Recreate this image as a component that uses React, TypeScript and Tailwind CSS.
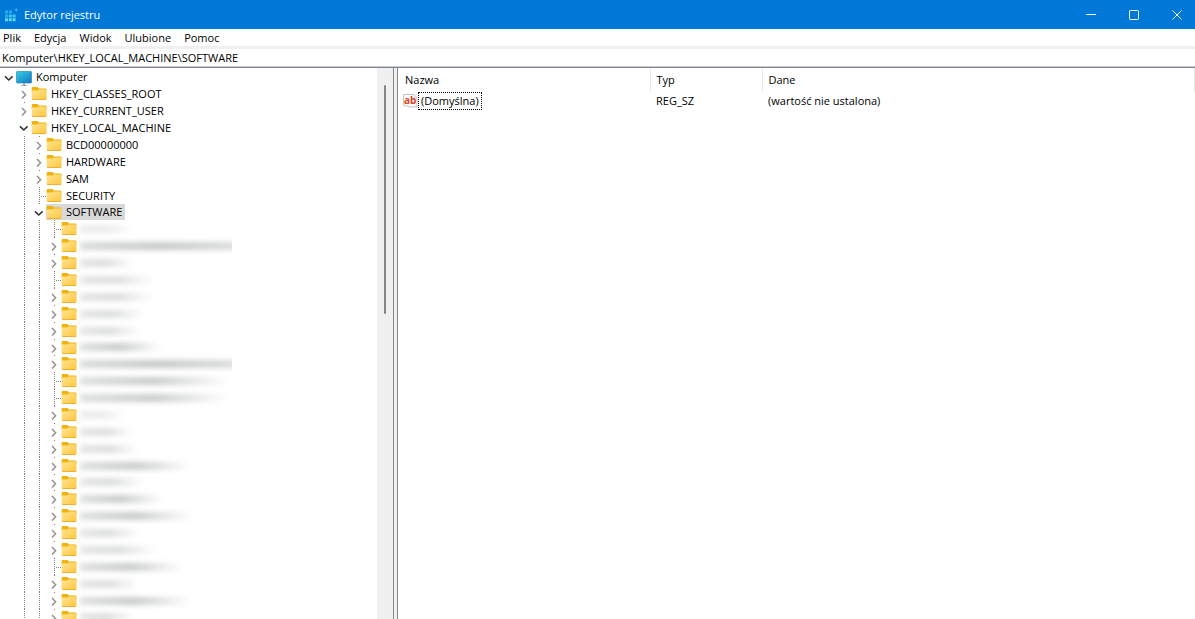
import React from 'react';

type Kind = 'open' | 'closed' | 'leaf';
type Guide = 'none' | 'line';
type Tone = 'faint' | 'light' | 'mid' | 'solid';

interface Node {
  level: number;
  kind: Kind;
  label?: string;
  selected?: boolean;
  hidden?: { width: number; tone: Tone };
}

const named: Node[] = [
  { level: 0, kind: 'open', label: 'Komputer' },
  { level: 1, kind: 'closed', label: 'HKEY_CLASSES_ROOT' },
  { level: 1, kind: 'closed', label: 'HKEY_CURRENT_USER' },
  { level: 1, kind: 'open', label: 'HKEY_LOCAL_MACHINE' },
  { level: 2, kind: 'closed', label: 'BCD00000000' },
  { level: 2, kind: 'closed', label: 'HARDWARE' },
  { level: 2, kind: 'closed', label: 'SAM' },
  { level: 2, kind: 'leaf', label: 'SECURITY' },
  { level: 2, kind: 'open', label: 'SOFTWARE', selected: true },
];

const redacted: [Kind, number, Tone][] = [
  ['leaf', 54, 'faint'],
  ['closed', 160, 'solid'],
  ['closed', 54, 'light'],
  ['leaf', 76, 'light'],
  ['closed', 76, 'light'],
  ['closed', 66, 'light'],
  ['closed', 62, 'light'],
  ['closed', 82, 'mid'],
  ['closed', 160, 'solid'],
  ['leaf', 150, 'mid'],
  ['leaf', 150, 'mid'],
  ['closed', 46, 'faint'],
  ['closed', 54, 'light'],
  ['closed', 60, 'light'],
  ['closed', 112, 'mid'],
  ['closed', 66, 'light'],
  ['closed', 84, 'mid'],
  ['closed', 114, 'mid'],
  ['closed', 60, 'light'],
  ['closed', 78, 'light'],
  ['leaf', 104, 'mid'],
  ['closed', 60, 'light'],
  ['closed', 112, 'mid'],
  ['closed', 56, 'light'],
];

const nodes: Node[] = [
  ...named,
  ...redacted.map(([kind, width, tone]): Node => ({ level: 3, kind, hidden: { width, tone } })),
];

const tones: Record<Tone, string> = {
  faint: 'from-[#e6e6e6] via-[#e2e3e3] to-transparent',
  light: 'from-[#dadcdb] via-[#cfd2d1] to-transparent',
  mid: 'from-[#d2d5d4] via-[#b4bab7] to-transparent',
  solid: 'from-[#cdd0cf] via-[#b2b6b4] to-[#cfd2d1]',
};

function RegistryIcon() {
  return (
    <svg className="h-4 w-4" viewBox="0 0 16 16" aria-hidden="true">
      <path fill="#27aee6" d="M2 3.500h3v3H2zM5.800 3.500h3v3h-3zM2 7.400h3v3H2z" />
      <path fill="#45c6ef" d="M5.800 7.400h3v3h-3zM9.600 7.400h3v3h-3z" />
      <path fill="#5cd6f6" d="M2 11.300h3v3H2zM5.800 11.300h3v3h-3zM9.600 11.300h3v3h-3z" />
      <path fill="#2fa9e6" d="M13.300 1l1.900 1.900-1.900 1.900-1.900-1.900z" />
    </svg>
  );
}

function FolderIcon() {
  return (
    <svg className="h-[17px] w-4 shrink-0" viewBox="0 0 16 17" aria-hidden="true">
      <defs>
        <linearGradient id="folder" x1="0" y1="0" x2="1" y2="1">
          <stop offset="0" stopColor="#ffe596" />
          <stop offset="1" stopColor="#fdc63c" />
        </linearGradient>
      </defs>
      <path fill="#f2b20c" d="M1.5 2h5l1.5 1.6h6.500a1 1 0 0 1 1 1V7H.7V2.800a.8.8 0 0 1 .8-.8z" />
      <path fill="url(#folder)" d="M.7 5.600h5.800l1.400-1.200h7.600v9.400a1 1 0 0 1-1 1H1.700a1 1 0 0 1-1-1z" />
      <path fill="#eeb02e" d="M1.200 14h13.800v.500a.6.6 0 0 1-.6.500H1.800a.6.6 0 0 1-.6-.5z" />
    </svg>
  );
}

function ComputerIcon() {
  return (
    <svg className="h-[17px] w-4 shrink-0" viewBox="0 0 16 17" aria-hidden="true">
      <defs>
        <linearGradient id="screen" x1="0" y1="0" x2="1" y2="1">
          <stop offset="0" stopColor="#35d0e4" />
          <stop offset="1" stopColor="#1277c4" />
        </linearGradient>
      </defs>
      <rect x=".5" y="2.5" width="15" height="11.5" rx=".8" fill="url(#screen)" stroke="#1b7fae" strokeWidth=".6" />
      <path fill="#9aa5ad" d="M7 14.2h2V16h2v.8H5V16h2z" />
    </svg>
  );
}

function Cell({ kind }: { kind: Guide | Kind }) {
  return (
    <svg
      className="h-full w-[15px] shrink-0"
      viewBox="0 0 15 17"
      preserveAspectRatio="xMidYMin slice"
      fill="none"
      aria-hidden="true"
    >
      {(kind === 'line' || kind === 'leaf') && (
        <path d="M8.5 0v17" stroke="#808080" strokeDasharray="1 1" shapeRendering="crispEdges" />
      )}
      {kind === 'leaf' && <path d="M10 9.5h5" stroke="#808080" strokeDasharray="1 1" shapeRendering="crispEdges" />}
      {kind === 'closed' && (
        <>
          <path d="M8.5 0v1" stroke="#808080" />
          <path d="M6 6l3.600 3.800L6 13.600" stroke="#929292" strokeWidth="1.5" />
        </>
      )}
      {kind === 'open' && <path d="M4 7.400l3.800 3.600 3.800-3.600" stroke="#333" strokeWidth="1.6" />}
    </svg>
  );
}

function TreeRow({ node, short }: { node: Node; short: boolean }) {
  const guides: Guide[] = Array.from({ length: node.level }, (_, i) => (i === 0 ? 'none' : 'line'));
  return (
    <li
      role="treeitem"
      aria-level={node.level + 1}
      aria-selected={!!node.selected}
      aria-expanded={node.kind === 'leaf' ? undefined : node.kind === 'open'}
      className={`flex items-center ${short ? 'h-4' : 'h-[17px]'}`}
    >
      {guides.map((g, i) => (
        <Cell key={i} kind={g} />
      ))}
      <Cell kind={node.kind} />
      <span className={`flex h-full items-center gap-1 ${node.selected ? 'bg-[#d9d9d9] pr-[3px]' : ''}`}>
        {node.level === 0 ? <ComputerIcon /> : <FolderIcon />}
        {node.label && <span className="whitespace-nowrap">{node.label}</span>}
      </span>
      {node.hidden && (
        <span className="ml-[2px] flex h-full w-[153px] items-center overflow-hidden">
          <span
            className={`block h-[6px] shrink-0 rounded-full bg-linear-to-r blur-[3px] ${tones[node.hidden.tone]}`}
            style={{ width: node.hidden.width }}
          />
        </span>
      )}
    </li>
  );
}

function WindowButtons() {
  return (
    <div className="flex h-full gap-[7px] text-white">
      <button type="button" aria-label="Minimalizuj" className="flex w-9 items-center justify-center">
        <svg className="h-[10px] w-[10px]" viewBox="0 0 10 10" fill="none" stroke="currentColor">
          <path d="M0 4.5h10" />
        </svg>
      </button>
      <button type="button" aria-label="Maksymalizuj" className="flex w-9 items-center justify-center">
        <svg className="h-[10px] w-[10px]" viewBox="0 0 10 10" fill="none" stroke="currentColor">
          <rect x=".5" y=".5" width="9" height="9" rx=".8" />
        </svg>
      </button>
      <button type="button" aria-label="Zamknij" className="flex w-9 items-center justify-center">
        <svg className="h-[10px] w-[10px]" viewBox="0 0 10 10" fill="none" stroke="currentColor">
          <path d="M.5.5l9 9M9.5.5l-9 9" />
        </svg>
      </button>
    </div>
  );
}

function StringValueIcon() {
  return (
    <svg className="h-4 w-[15px] shrink-0" viewBox="0 0 15 16" aria-hidden="true">
      <path
        d="M.5 1.5h10.500l3 3v10l-2-1.500-2 1.500-2-1-2 .5-2-1.500-1.500.5-2-1z"
        fill="#fbfbfb"
        stroke="#b5b5b5"
        strokeWidth=".8"
      />
      <path d="M11 1.500v3h3" fill="#ededed" stroke="#c4c4c4" strokeWidth=".6" />
      <text x="1" y="10.500" fontSize="10" fontWeight="700" fill="#d8431f" fontFamily="Open Sans, sans-serif">
        ab
      </text>
    </svg>
  );
}

export default function App() {
  return (
    <div className="flex h-screen flex-col overflow-hidden bg-white font-['Open_Sans','Noto_Sans',sans-serif] text-[11px] leading-4 text-black">
      <header className="flex h-[29px] shrink-0 items-center bg-[#0078d7] pl-[3px]">
        <RegistryIcon />
        <h1 className="ml-[5px] flex-1 text-white">Edytor rejestru</h1>
        <WindowButtons />
      </header>

      <nav className="flex h-[17px] shrink-0 items-center gap-[13px] pl-[3px]">
        {['Plik', 'Edycja', 'Widok', 'Ulubione', 'Pomoc'].map((item) => (
          <button key={item} type="button">
            {item}
          </button>
        ))}
      </nav>

      <div className="shrink-0 border-t-[3px] border-[#f0f0f0]">
        <input
          aria-label="Adres"
          className="block h-[17px] w-full bg-white pl-[2px] outline-none"
          defaultValue="Komputer\HKEY_LOCAL_MACHINE\SOFTWARE"
        />
      </div>

      <main className="flex min-h-0 flex-1 border-t border-[#c9cccf]">
        <section className="flex w-[394px] shrink-0 overflow-hidden border-t border-r border-[#82878f]">
          <ul role="tree" aria-label="Rejestr" className="flex-1 overflow-hidden pt-px pl-px">
            {nodes.map((node, i) => (
              <TreeRow key={i} node={node} short={i % 8 === 0} />
            ))}
          </ul>
          <div className="flex w-4 justify-center bg-[#f0f0f0] pt-[17px]">
            <div className="h-[229px] w-[2px] rounded-full bg-[#868686]" />
          </div>
        </section>
        <div className="w-[3px] shrink-0 border-t border-[#82878f] bg-[#f0f0f0]" />
        <section className="min-w-0 flex-1 border-t border-l border-[#82878f]">
          <table className="w-full table-fixed border-collapse text-left">
            <colgroup>
              <col className="w-[252px]" />
              <col className="w-[112px]" />
              <col />
            </colgroup>
            <thead>
              <tr className="h-6">
                <th className="border-r border-[#e8e8e8] pl-[7px] font-normal">Nazwa</th>
                <th className="border-r border-[#e8e8e8] pl-[6px] font-normal">Typ</th>
                <th className="border-r border-[#e8e8e8] pl-[6px] font-normal">Dane</th>
              </tr>
            </thead>
            <tbody>
              <tr>
                <td className="pl-[5px]">
                  <span className="flex items-center">
                    <StringValueIcon />
                    <span className="border border-dotted border-black px-[2px]">(Domyślna)</span>
                  </span>
                </td>
                <td className="pl-[6px]">REG_SZ</td>
                <td className="pl-[6px]">(wartość nie ustalona)</td>
              </tr>
            </tbody>
          </table>
        </section>
      </main>
    </div>
  );
}
